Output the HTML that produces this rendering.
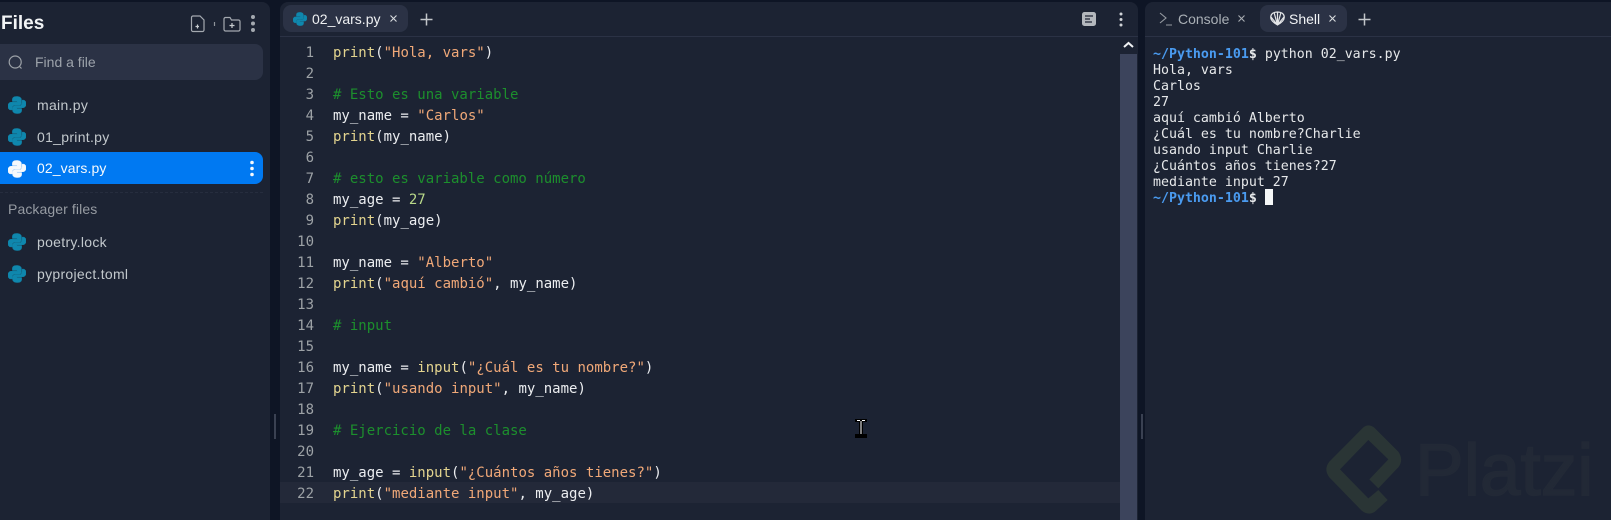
<!DOCTYPE html>
<html><head><meta charset="utf-8">
<style>
html,body{margin:0;padding:0;width:1611px;height:520px;overflow:hidden;background:#0e1525;}
*{box-sizing:border-box}
.abs,.t,.l,.n{position:absolute;white-space:pre}
.ui{font-family:"Liberation Sans",sans-serif}
.panel{position:absolute;background:#1c2333;top:2px;height:518px}
.t{font:14px/32px "Liberation Sans",sans-serif;color:#c2c8cc;left:37px;letter-spacing:.3px}
.n{font:14px/21px "DejaVu Sans Mono",monospace;color:#9da2a6;left:280px;width:34px;text-align:right;transform:translateY(2px)}
.l{left:333px;font:14px/21px "DejaVu Sans Mono",monospace;color:#ebedf0;transform:translateY(2px)}
.f{color:#e3d48f}.s{color:#f0a878}.d{color:#b9d98a}
.term{position:absolute;left:1153px;top:47px;font:13.28px/16px "DejaVu Sans Mono",monospace;color:#e6e8ea;white-space:pre}
.term b{color:#4a9bf0}.term i{font-style:normal;font-weight:bold;color:#e6e8ea}
.py{fill:#0f87ad;stroke:#0f87ad;stroke-width:.5}
.pyw{fill:#f5f9fc;stroke:#f5f9fc;stroke-width:.5}
</style></head><body>
<div class="panel" style="left:0;width:270px;border-radius:0 8px 0 0"></div>
<div class="panel" style="left:280px;width:858px;border-radius:8px 8px 0 0"></div>
<div class="panel" style="left:1145px;width:466px;border-radius:8px 0 0 0"></div>

<!-- sidebar -->
<div class="abs ui" style="left:1px;top:11px;font-size:19px;line-height:26px;font-weight:bold;color:#f2f4f6">Files</div>
<svg class="abs" style="left:180px;top:5px" width="90" height="40" viewBox="0 0 90 40" fill="none" stroke="#a4a9b0" stroke-width="1.2">
<path d="M13 11h7l4 4v10a1.5 1.5 0 0 1-1.500 1.500h-9.500a1.500 1.500 0 0 1-1.500-1.500v-12.500a1.500 1.500 0 0 1 1.500-1.500z"/><path d="M19 21.500h-3.500M17.500 19.500v4" stroke="#c8ccd0"/>
<path d="M34.500 21v-4" stroke="#8f949b"/>
<path d="M45 12.500h5l1.500 2.500h7a1.500 1.500 0 0 1 1.500 1.500v8a1.500 1.500 0 0 1-1.500 1.500h-13a1.500 1.500 0 0 1-1.500-1.500v-10.500a1.500 1.500 0 0 1 1.500-1.500z"/><path d="M49.500 20.500h5M52 18v5" stroke="#c8ccd0"/>
<g fill="#a4a9b0" stroke="none"><circle cx="73" cy="12" r="2"/><circle cx="73" cy="18.500" r="2"/><circle cx="73" cy="25" r="2"/></g></svg>
<div class="abs" style="left:0;top:44px;width:263px;height:36px;background:#2b3245;border-radius:0 8px 8px 0"></div>
<svg class="abs" style="left:7px;top:54px" width="18" height="18" viewBox="0 0 18 18" fill="none" stroke="#9da2a8" stroke-width="1.200"><circle cx="8.200" cy="8" r="6"/><path d="M12.500 12.500l2 2"/></svg>
<div class="abs ui" style="left:35px;top:44px;font-size:14px;line-height:36px;color:#9da3ab">Find a file</div>

<div class="abs" style="left:0;top:152px;width:263px;height:32px;background:#0079f2;border-radius:0 8px 8px 0"></div>
<svg width="0" height="0" style="position:absolute"><defs>
<symbol id="py" viewBox="0 0 18 18"><path d="M8.800 0.500C5 0.500 4.400 2 4.400 3.600V5.500H9.200V6.300H2.800C1.200 6.300 0 7.800 0 10.200C0 12.800 1.200 13.900 2.800 13.900H4.300V11.800C4.300 10.300 5.500 9.300 7 9.300H11.100C12.400 9.300 13.400 8.300 13.400 7V3.600C13.400 1.800 11.800 0.500 8.800 0.500Z"/><path d="M9.200 17.500C13 17.500 13.600 16 13.600 14.400V12.500H8.800V11.700H15.200C16.800 11.700 18 10.200 18 7.800C18 5.200 16.800 4.100 15.200 4.100H14.100V6.200C14.100 8.500 12.700 9.900 11 9.900H6.900C5.600 9.900 4.600 10.900 4.600 12.200V14.400C4.600 16.200 6.200 17.500 9.200 17.500Z"/></symbol>
</defs></svg>
<svg class="abs py" style="left:8px;top:96px" width="18" height="18"><use href="#py"/></svg>
<svg class="abs py" style="left:8px;top:128px" width="18" height="18"><use href="#py"/></svg>
<svg class="abs pyw" style="left:8px;top:160px" width="18" height="18"><use href="#py"/></svg>
<svg class="abs py" style="left:8px;top:233px" width="18" height="18"><use href="#py"/></svg>
<svg class="abs py" style="left:8px;top:265px" width="18" height="18"><use href="#py"/></svg>
<div class="t" style="top:89px">main.py</div>
<div class="t" style="top:121px">01_print.py</div>
<div class="t" style="top:152px;color:#f5f9fc;letter-spacing:.1px">02_vars.py</div>
<div class="t" style="top:226px">poetry.lock</div>
<div class="t" style="top:258px">pyproject.toml</div>
<div class="t" style="top:193px;left:8px;color:#969ba2;letter-spacing:.1px">Packager files</div>
<svg class="abs" style="left:248px;top:160px" width="8" height="18" fill="#f5f9fc"><circle cx="4" cy="2.500" r="1.800"/><circle cx="4" cy="8.500" r="1.800"/><circle cx="4" cy="14.500" r="1.800"/></svg>
<div class="abs" style="left:0;top:192px;width:263px;border-top:1px dashed #262d3e"></div>

<!-- grips -->
<div class="abs" style="left:274px;top:414px;width:2px;height:25px;background:#3a4152"></div>
<div class="abs" style="left:1141px;top:414px;width:2px;height:25px;background:#3a4152"></div>

<!-- editor tabs -->
<div class="abs" style="left:283px;top:5px;width:125px;height:27px;background:#2b3245;border-radius:8px"></div>
<svg class="abs py" style="left:293px;top:12px" width="14" height="14"><use href="#py"/></svg>
<div class="abs ui" style="left:312px;top:5px;font-size:14px;line-height:29px;color:#eef0f2">02_vars.py</div>
<svg class="abs" style="left:389px;top:14px" width="10" height="10" stroke="#d8dbde" stroke-width="1.100"><path d="M1.500 1.500l6 6M7.500 1.500l-6 6"/></svg>
<svg class="abs" style="left:420px;top:13px" width="13" height="13" stroke="#c2c6ca" stroke-width="1.500"><path d="M6.500 0.500v12M0.500 6.500h12"/></svg>
<svg class="abs" style="left:1081px;top:11px" width="16" height="16"><rect x="1" y="1" width="14" height="14" rx="2.500" fill="#b4b8bd"/><path d="M4 5h8M4 8h5M4 11h7" stroke="#1c2333" stroke-width="1.300"/></svg>
<svg class="abs" style="left:1117px;top:11px" width="8" height="16" fill="#d0d3d7"><circle cx="4" cy="3" r="1.500"/><circle cx="4" cy="8.500" r="1.500"/><circle cx="4" cy="14" r="1.500"/></svg>
<div class="abs" style="left:280px;top:36px;width:858px;height:1px;background:#2b3245"></div>
<div class="abs" style="left:1145px;top:36px;width:466px;height:1px;background:#2b3245"></div>

<!-- highlight + scrollbar -->
<div class="abs" style="left:280px;top:482px;width:840px;height:21px;background:#232939"></div>
<div class="abs" style="left:1120px;top:54px;width:17px;height:466px;background:#3c445c"></div>
<svg class="abs" style="left:1123px;top:41px" width="11" height="8" fill="none" stroke="#f0f2f4" stroke-width="2"><path d="M1 6l4.500-4 4.500 4"/></svg>

<!-- line numbers -->
<div class="n" style="top:41px">1</div><div class="n" style="top:62px">2</div><div class="n" style="top:83px">3</div><div class="n" style="top:104px">4</div><div class="n" style="top:125px">5</div><div class="n" style="top:146px">6</div><div class="n" style="top:167px">7</div><div class="n" style="top:188px">8</div><div class="n" style="top:209px">9</div><div class="n" style="top:230px">10</div><div class="n" style="top:251px">11</div><div class="n" style="top:272px">12</div><div class="n" style="top:293px">13</div><div class="n" style="top:314px">14</div><div class="n" style="top:335px">15</div><div class="n" style="top:356px">16</div><div class="n" style="top:377px">17</div><div class="n" style="top:398px">18</div><div class="n" style="top:419px">19</div><div class="n" style="top:440px">20</div><div class="n" style="top:461px">21</div><div class="n" style="top:482px">22</div>

<!-- code -->
<div class="l" style="top:41px"><span class="f">print</span>(<span class="s">"Hola, vars"</span>)</div>
<div class="l" style="top:83px;color:#1c8f2d"># Esto es una variable</div>
<div class="l" style="top:104px">my_name = <span class="s">"Carlos"</span></div>
<div class="l" style="top:125px"><span class="f">print</span>(my_name)</div>
<div class="l" style="top:167px;color:#1c8f2d"># esto es variable como número</div>
<div class="l" style="top:188px">my_age = <span class="d">27</span></div>
<div class="l" style="top:209px"><span class="f">print</span>(my_age)</div>
<div class="l" style="top:251px">my_name = <span class="s">"Alberto"</span></div>
<div class="l" style="top:272px"><span class="f">print</span>(<span class="s">"aquí cambió"</span>, my_name)</div>
<div class="l" style="top:314px;color:#1c8f2d"># input</div>
<div class="l" style="top:356px">my_name = <span class="f">input</span>(<span class="s">"¿Cuál es tu nombre?"</span>)</div>
<div class="l" style="top:377px"><span class="f">print</span>(<span class="s">"usando input"</span>, my_name)</div>
<div class="l" style="top:419px;color:#1c8f2d"># Ejercicio de la clase</div>
<div class="l" style="top:461px">my_age = <span class="f">input</span>(<span class="s">"¿Cuántos años tienes?"</span>)</div>
<div class="l" style="top:482px"><span class="f">print</span>(<span class="s">"mediante input"</span>, my_age)</div>

<!-- I-beam cursor -->
<svg class="abs" style="left:855px;top:419px" width="13" height="20"><path d="M0 0h12v3h-4v12h4v4h-12v-4h4v-12h-4z" fill="#000"/><path d="M2 1.500h3M7 1.500h3M6 2v13" stroke="#fff" fill="none"/></svg>

<!-- shell tabs -->
<svg class="abs" style="left:1159px;top:11px" width="14" height="16" fill="none" stroke="#969ba2" stroke-width="1.100"><path d="M1 2l6 5-6 5M7 14h6"/></svg>
<div class="abs ui" style="left:1178px;top:5px;font-size:14px;line-height:29px;color:#aab0b6">Console</div>
<svg class="abs" style="left:1237px;top:14px" width="10" height="10" stroke="#a8adb2" stroke-width="1.100"><path d="M1.500 1.500l6 6M7.500 1.500l-6 6"/></svg>
<div class="abs" style="left:1260px;top:5px;width:87px;height:27px;background:#2b3245;border-radius:8px"></div>
<svg class="abs" style="left:1270px;top:11px" width="15" height="15" viewBox="0 0 15 15" fill="none" stroke="#e4e6e8" stroke-width="1.200"><path d="M7.500 14C4 12 .6 9 .7 6 1 2.500 4 1 7.500 1S14 2.500 14.300 6C14.400 9 11 12 7.500 14ZM7.500 14V1M7.500 14 4.200 2M7.500 14 10.800 2M7.500 14 1 6M7.500 14 14 6"/></svg>
<div class="abs ui" style="left:1289px;top:5px;font-size:14px;line-height:29px;color:#f2f4f6">Shell</div>
<svg class="abs" style="left:1328px;top:14px" width="10" height="10" stroke="#d8dbde" stroke-width="1.100"><path d="M1.500 1.500l6 6M7.500 1.500l-6 6"/></svg>
<svg class="abs" style="left:1358px;top:13px" width="13" height="13" stroke="#c2c6ca" stroke-width="1.500"><path d="M6.500 0.500v12M0.500 6.500h12"/></svg>

<!-- terminal -->
<div class="term"><b style="font-weight:bold">~/Python-101</b><i>$</i> python 02_vars.py
Hola, vars
Carlos
27
aquí cambió Alberto
¿Cuál es tu nombre?Charlie
usando input Charlie
¿Cuántos años tienes?27
mediante input 27
<b style="font-weight:bold">~/Python-101</b><i>$</i> </div>
<div class="abs" style="left:1265px;top:189px;width:8px;height:16px;background:#f5f7f8"></div>

<!-- watermark -->
<svg class="abs" style="left:1250px;top:380px" width="361" height="140" viewBox="0 0 1083 420"><path fill="#2a3535" d="M340 142Q355 130 372 142L445 215Q462 240 445 262L385 325 358 298 415 238 355 180 270 268 355 355 385 330 413 360 375 395Q355 408 335 392L238 292Q220 268 238 245Z"/></svg>
<div class="abs ui" style="left:1415px;top:429px;font-size:73px;line-height:84px;color:#222936;-webkit-text-stroke:1.500px #222936">Platzi</div>
</body></html>
